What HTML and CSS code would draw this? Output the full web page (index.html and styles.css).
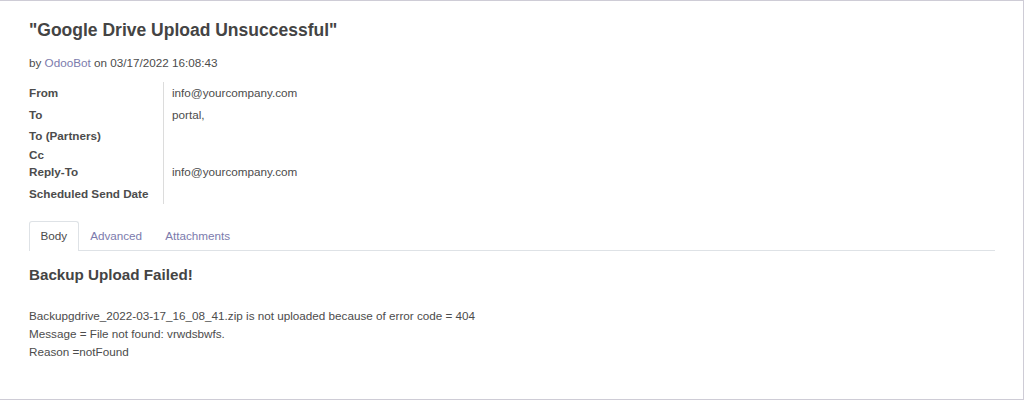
FILE: index.html
```html
<!DOCTYPE html>
<html>
<head>
<meta charset="utf-8">
<link rel="stylesheet" href="styles.css">
</head>
<body>
<div class="card">
  <h1 class="title">"Google Drive Upload Unsuccessful"</h1>
  <div class="byline">by <a class="link">OdooBot</a> on 03/17/2022 16:08:43</div>
  <div class="fields">
    <div class="row r-from"><div class="label">From</div><div class="value">info@yourcompany.com</div></div>
    <div class="row r-to"><div class="label">To</div><div class="value">portal,</div></div>
    <div class="row r-partners"><div class="label">To (Partners)</div><div class="value"></div></div>
    <div class="row r-cc"><div class="label">Cc</div><div class="value"></div></div>
    <div class="row r-reply"><div class="label">Reply-To</div><div class="value">info@yourcompany.com</div></div>
    <div class="row r-sched"><div class="label">Scheduled Send Date</div><div class="value"></div></div>
  </div>
  <div class="tabs">
    <div class="tab active">Body</div>
    <div class="tab">Advanced</div>
    <div class="tab">Attachments</div>
  </div>
  <div class="content">
    <h3 class="heading">Backup Upload Failed!</h3>
    <p class="msg">Backupgdrive_2022-03-17_16_08_41.zip is not uploaded because of error code = 404<br>Message = File not found: vrwdsbwfs.<br>Reason =notFound</p>
  </div>
</div>
</body>
</html>
```
FILE: styles.css
```css
html, body {
  margin: 0;
  padding: 0;
  background: #ffffff;
}
body {
  font-family: "Liberation Sans", Arial, sans-serif;
  font-size: 11.7px;
  color: #4c4c4c;
  overflow: hidden;
}
.card {
  box-sizing: border-box;
  width: 1025px;
  height: 400px;
  margin-left: -1px;
  border: 1px solid #ceccd6;
  padding: 17px 28px 0 29px;
  background: #fff;
}
.title {
  margin: 0;
  font-size: 17.5px;
  line-height: 24px;
  font-weight: bold;
  color: #444;
}
.byline {
  margin-top: 12px;
  line-height: 18px;
  color: #4c4c4c;
}
.link {
  color: #7c7bad;
  text-decoration: none;
}
.fields {
  margin-top: 10px;
  display: flex;
  flex-direction: column;
  width: 400px;
}
.row {
  display: flex;
  align-items: center;
}
.label {
  box-sizing: border-box;
  width: 135px;
  align-self: stretch;
  display: flex;
  align-items: center;
  font-weight: bold;
  border-right: 1px solid #dcdcdc;
  line-height: 16px;
}
.value {
  padding-left: 8px;
  line-height: 16px;
}
.r-from { height: 22px; }
.r-to { height: 22px; }
.r-partners { height: 20px; }
.r-cc { height: 18px; }
.r-reply { height: 16px; }
.r-sched { height: 24px; }
.r-sched .label { padding-top: 4px; }
.tabs {
  margin-top: 17px;
  display: flex;
  border-bottom: 1px solid #dee2e6;
  height: 29px;
}
.tab {
  box-sizing: border-box;
  padding: 0 10.5px 2px;
  height: 30px;
  line-height: 27px;
  color: #7c7bad;
  border: 1px solid transparent;
  border-bottom: none;
  border-radius: 3px 3px 0 0;
}
.tab.active {
  color: #4c4c4c;
  border-color: #dee2e6;
  background: #fff;
}
.content {
  padding-top: 13px;
}
.heading {
  margin: 0;
  font-size: 15.2px;
  line-height: 22px;
  font-weight: bold;
  color: #444;
}
.msg {
  margin: 21px 0 0 0;
  line-height: 18px;
}
```
